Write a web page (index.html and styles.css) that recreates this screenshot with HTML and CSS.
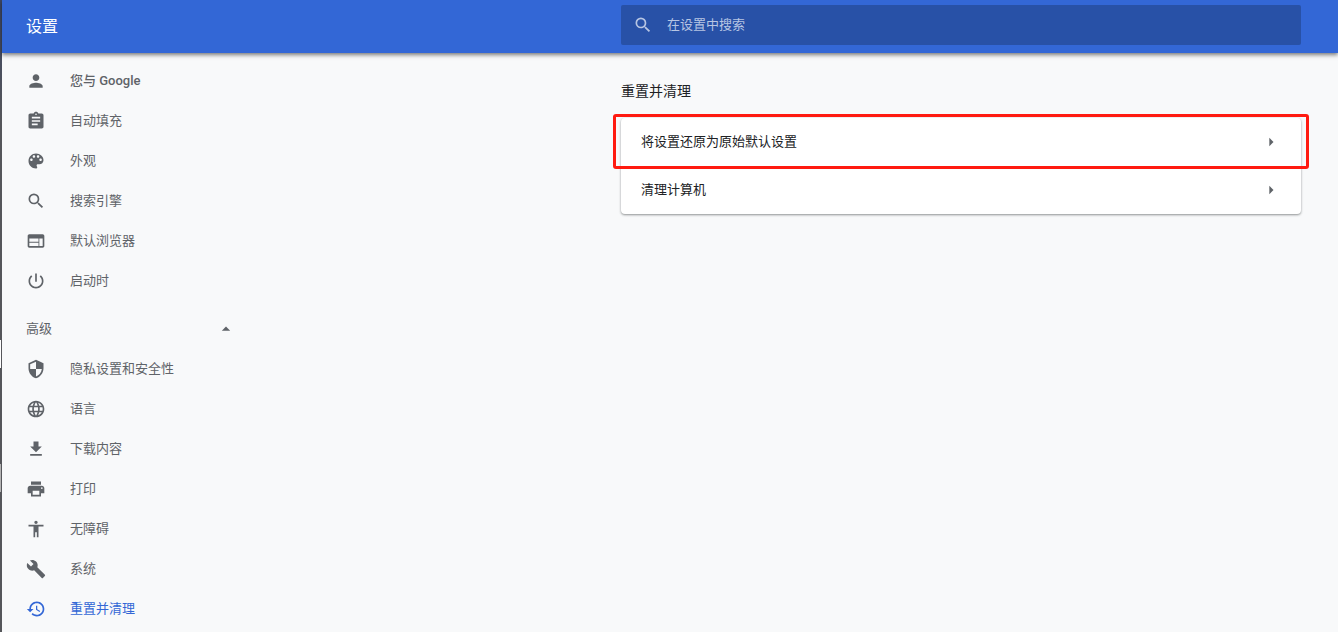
FILE: index.html
```html
<!DOCTYPE html>
<html lang="zh-CN">
<head>
    <meta charset="UTF-8">
    <meta name="viewport" content="width=device-width, initial-scale=1.0">
    <title>设置</title>
    <link rel="stylesheet" href="styles.css">
</head>
<body>

<div class="window-edge">
    <span class="edge-mark"></span>
    <span class="edge-mark edge-mark-dim"></span>
</div>

<div class="page">
    <header class="toolbar">
        <h1>设置</h1>
        <label class="search">
            <svg class="icon" viewBox="0 0 24 24"><path d="M15.5 14h-.79l-.28-.27A6.47 6.47 0 0 0 16 9.5 6.5 6.5 0 1 0 9.5 16c1.61 0 3.09-.59 4.23-1.57l.27.28v.79l5 4.99L20.49 19l-4.99-5zm-6 0C7.01 14 5 11.99 5 9.5S7.01 5 9.5 5 14 7.01 14 9.5 11.99 14 9.5 14z"/></svg>
            <input type="search" placeholder="在设置中搜索" aria-label="在设置中搜索">
        </label>
    </header>

    <div class="container">
        <nav class="sidebar">
            <a class="menu-item" href="#people">
                <svg class="icon" viewBox="0 0 24 24"><path d="M12 12c2.21 0 4-1.79 4-4s-1.79-4-4-4-4 1.79-4 4 1.79 4 4 4zm0 2c-2.67 0-8 1.34-8 4v2h16v-2c0-2.66-5.33-4-8-4z"/></svg>
                <span class="latin">您与 Google</span>
            </a>
            <a class="menu-item" href="#autofill">
                <svg class="icon" viewBox="0 0 24 24"><path d="M19 3h-4.18C14.4 1.84 13.3 1 12 1c-1.3 0-2.4.84-2.82 2H5c-1.1 0-2 .9-2 2v14c0 1.1.9 2 2 2h14c1.1 0 2-.9 2-2V5c0-1.1-.9-2-2-2zm-7 0c.55 0 1 .45 1 1s-.45 1-1 1-1-.45-1-1 .45-1 1-1zm2 14H7v-2h7v2zm3-4H7v-2h10v2zm0-4H7V7h10v2z"/></svg>
                <span>自动填充</span>
            </a>
            <a class="menu-item" href="#appearance">
                <svg class="icon" viewBox="0 0 24 24"><path d="M12 3c-4.97 0-9 4.03-9 9s4.03 9 9 9c.83 0 1.5-.67 1.5-1.5 0-.39-.15-.74-.39-1.01-.23-.26-.38-.61-.38-.99 0-.83.67-1.5 1.5-1.5H16c2.76 0 5-2.24 5-5 0-4.42-4.03-8-9-8zm-5.5 9c-.83 0-1.5-.67-1.5-1.5S5.67 9 6.5 9 8 9.67 8 10.500 7.330 12 6.500 12zm3-4C8.670 8 8 7.330 8 6.500S8.670 5 9.500 5s1.500.67 1.500 1.500S10.330 8 9.500 8zm5 0c-.83 0-1.500-.67-1.500-1.500S13.670 5 14.500 5s1.500.67 1.500 1.500S15.330 8 14.500 8zm3 4c-.83 0-1.500-.67-1.500-1.500S16.670 9 17.500 9s1.500.67 1.500 1.500-.67 1.500-1.500 1.500z"/></svg>
                <span>外观</span>
            </a>
            <a class="menu-item" href="#search">
                <svg class="icon" viewBox="0 0 24 24"><path d="M15.5 14h-.79l-.28-.27A6.47 6.47 0 0 0 16 9.5 6.5 6.5 0 1 0 9.5 16c1.61 0 3.09-.59 4.23-1.57l.27.28v.79l5 4.99L20.49 19l-4.99-5zm-6 0C7.01 14 5 11.99 5 9.5S7.01 5 9.5 5 14 7.01 14 9.5 11.99 14 9.5 14z"/></svg>
                <span>搜索引擎</span>
            </a>
            <a class="menu-item" href="#browser">
                <svg class="icon" viewBox="0 0 24 24"><path d="M20 4H4c-1.100 0-1.990.9-1.990 2L2 18c0 1.100.9 2 2 2h16c1.100 0 2-.9 2-2V6c0-1.100-.9-2-2-2zm-5 14H4v-4h11v4zm0-5H4V9h11v4zm5 5h-4V9h4v9z"/></svg>
                <span>默认浏览器</span>
            </a>
            <a class="menu-item" href="#startup">
                <svg class="icon" viewBox="0 0 24 24"><path d="M13 3h-2v10h2V3zm4.830 2.170l-1.420 1.420C17.990 7.860 19 9.810 19 12c0 3.870-3.130 7-7 7s-7-3.130-7-7c0-2.190 1.010-4.140 2.580-5.420L6.170 5.170C4.230 6.820 3 9.260 3 12c0 4.970 4.030 9 9 9s9-4.030 9-9c0-2.740-1.230-5.180-3.170-6.830z"/></svg>
                <span>启动时</span>
            </a>

            <button type="button" class="advanced" aria-expanded="true">
                <span>高级</span>
                <svg class="icon" viewBox="0 0 24 24"><path d="M7 14l5-5 5 5z"/></svg>
            </button>

            <a class="menu-item" href="#privacy">
                <svg class="icon" viewBox="0 0 24 24"><path d="M12 1L3 5v6c0 5.550 3.840 10.740 9 12 5.160-1.260 9-6.450 9-12V5l-9-4zm0 10.990h7c-.53 4.120-3.280 7.790-7 8.940V12H5V6.300l7-3.110v8.800z"/></svg>
                <span>隐私设置和安全性</span>
            </a>
            <a class="menu-item" href="#languages">
                <svg class="icon" viewBox="0 0 24 24"><path d="M11.990 2C6.470 2 2 6.480 2 12s4.470 10 9.990 10C17.520 22 22 17.520 22 12S17.520 2 11.990 2zm6.930 6h-2.950c-.32-1.250-.78-2.450-1.380-3.560 1.840.63 3.370 1.910 4.330 3.560zM12 4.040c.83 1.200 1.480 2.530 1.910 3.960h-3.820c.43-1.430 1.080-2.760 1.910-3.960zM4.260 14C4.100 13.360 4 12.690 4 12s.1-1.360.26-2h3.380c-.08.66-.14 1.320-.14 2s.06 1.340.14 2H4.260zm.82 2h2.950c.32 1.250.78 2.450 1.380 3.560-1.840-.63-3.370-1.900-4.330-3.560zm2.950-8H5.080c.96-1.660 2.490-2.930 4.330-3.560C8.810 5.550 8.350 6.750 8.030 8zM12 19.960c-.83-1.200-1.480-2.530-1.910-3.960h3.820c-.43 1.430-1.080 2.760-1.910 3.960zM14.340 14H9.660c-.09-.66-.16-1.320-.16-2s.07-1.350.16-2h4.680c.09.65.16 1.320.16 2s-.07 1.340-.16 2zm.25 5.560c.6-1.110 1.060-2.310 1.380-3.560h2.950c-.96 1.650-2.490 2.930-4.330 3.560zM16.360 14c.08-.66.14-1.320.14-2s-.06-1.340-.14-2h3.380c.16.64.26 1.310.26 2s-.1 1.360-.26 2h-3.380z"/></svg>
                <span>语言</span>
            </a>
            <a class="menu-item" href="#downloads">
                <svg class="icon" viewBox="0 0 24 24"><path d="M19 9h-4V3H9v6H5l7 7 7-7zM5 18v2h14v-2H5z"/></svg>
                <span>下载内容</span>
            </a>
            <a class="menu-item" href="#printing">
                <svg class="icon" viewBox="0 0 24 24"><path d="M19 8H5c-1.660 0-3 1.340-3 3v6h4v4h12v-4h4v-6c0-1.660-1.340-3-3-3zm-3 11H8v-5h8v5zm3-7c-.55 0-1-.45-1-1s.45-1 1-1 1 .45 1 1-.45 1-1 1zm-1-9H6v4h12V3z"/></svg>
                <span>打印</span>
            </a>
            <a class="menu-item" href="#accessibility">
                <svg class="icon" viewBox="0 0 24 24"><path d="M12 2c1.100 0 2 .9 2 2s-.9 2-2 2-2-.9-2-2 .9-2 2-2zm9 7h-6v13h-2v-6h-2v6H9V9H3V7h18v2z"/></svg>
                <span>无障碍</span>
            </a>
            <a class="menu-item" href="#system">
                <svg class="icon" viewBox="0 0 24 24"><path d="M22.700 19l-9.100-9.100c.9-2.300.4-5-1.500-6.900-2-2-5-2.400-7.400-1.300L9 6 6 9 1.600 4.700C.4 7.100.9 10.100 2.900 12.100c1.900 1.900 4.600 2.400 6.900 1.500l9.100 9.100c.4.4 1 .4 1.400 0l2.300-2.300c.5-.4.5-1.100.1-1.400z"/></svg>
                <span>系统</span>
            </a>
            <a class="menu-item selected" href="#reset">
                <svg class="icon" viewBox="0 0 24 24"><path d="M13 3c-4.970 0-9 4.030-9 9H1l3.890 3.890.07.14L9 12H6c0-3.870 3.130-7 7-7s7 3.130 7 7-3.130 7-7 7c-1.930 0-3.680-.79-4.940-2.060l-1.420 1.420C8.270 19.990 10.510 21 13 21c4.970 0 9-4.030 9-9s-4.030-9-9-9zm-1 5v5l4.280 2.540.72-1.210-3.500-2.080V8H12z"/></svg>
                <span>重置并清理</span>
            </a>
        </nav>

        <main class="content">
            <h2>重置并清理</h2>
            <div class="card">
                <button type="button" class="row highlighted">
                    <span>将设置还原为原始默认设置</span>
                    <svg class="icon" viewBox="0 0 24 24"><path d="M10 17l5-5-5-5z"/></svg>
                </button>
                <button type="button" class="row">
                    <span>清理计算机</span>
                    <svg class="icon" viewBox="0 0 24 24"><path d="M10 17l5-5-5-5z"/></svg>
                </button>
            </div>
        </main>
    </div>
</div>

</body>
</html>
```

FILE: styles.css
```css
* {
    box-sizing: border-box;
}

body {
    margin: 0;
    display: flex;
    height: 100vh;
    overflow: hidden;
    background-color: #f8f9fa;
    color: #202124;
    font-family: Roboto, "Noto Sans CJK SC", sans-serif;
    font-size: 13px;
    line-height: 20px;
}

button, input {
    font: inherit;
    color: inherit;
    border: none;
    background: none;
    padding: 0;
}

.icon {
    width: 20px;
    height: 20px;
    flex: none;
    fill: currentColor;
}

/* Strip of the window behind, left of the page */
.window-edge {
    flex: none;
    width: 2px;
    padding-top: 340px;
    background: linear-gradient(#3c4664, #55565a 120px);
}

.edge-mark {
    display: block;
    width: 1px;
    height: 28px;
    margin-bottom: 96px;
    background-color: #fff;
}

.edge-mark-dim {
    background-color: #b4b4b4;
}

.page {
    flex: 1;
    min-width: 0;
}

.toolbar {
    display: flex;
    justify-content: space-between;
    align-items: center;
    height: 53px;
    padding: 0 37px 0 24px;
    background-color: #3367d6;
    color: #fff;
    box-shadow: 0 2px 4px rgba(0, 0, 0, 0.5);
}

.toolbar h1 {
    margin: 0;
    font-size: 16px;
    font-weight: 400;
}

.search {
    display: flex;
    align-items: center;
    gap: 14px;
    width: 680px;
    height: 40px;
    margin-bottom: 4px;
    padding: 0 12px;
    border-radius: 2px;
    background-color: #2851a7;
    color: #b7c5e3;
}

.search input {
    flex: 1;
    outline: none;
}

.search input::placeholder {
    color: inherit;
    opacity: 1;
}

.container {
    display: flex;
    justify-content: space-between;
    padding-right: 37px;
}

.sidebar {
    width: 266px;
    padding-top: 8px;
    color: #5f6368;
}

.menu-item {
    display: flex;
    align-items: center;
    gap: 24px;
    height: 40px;
    padding-left: 24px;
    color: inherit;
    text-decoration: none;
}

.latin {
    font-weight: 500;
}

.menu-item.selected {
    color: #3367d6;
}

.advanced {
    display: flex;
    justify-content: space-between;
    align-items: center;
    width: 100%;
    height: 40px;
    margin-top: 8px;
    padding: 0 32px 0 24px;
}

.content {
    width: 680px;
}

.content h2 {
    margin: 28px 0 17px;
    font-size: 14px;
    font-weight: 400;
}

.card {
    border-radius: 4px;
    background-color: #fff;
    box-shadow: 0 1px 2px rgba(60, 64, 67, 0.4), 0 1px 3px rgba(60, 64, 67, 0.2);
}

.row {
    position: relative;
    display: flex;
    justify-content: space-between;
    align-items: center;
    width: 100%;
    height: 48px;
    padding: 0 20px;
}

.row .icon {
    color: #5f6368;
}

/* Red frame around the option to click */
.highlighted::after {
    content: "";
    position: absolute;
    inset: -4px -8px -3px;
    border: 3px solid #ff1a10;
    border-radius: 3px;
}
```
